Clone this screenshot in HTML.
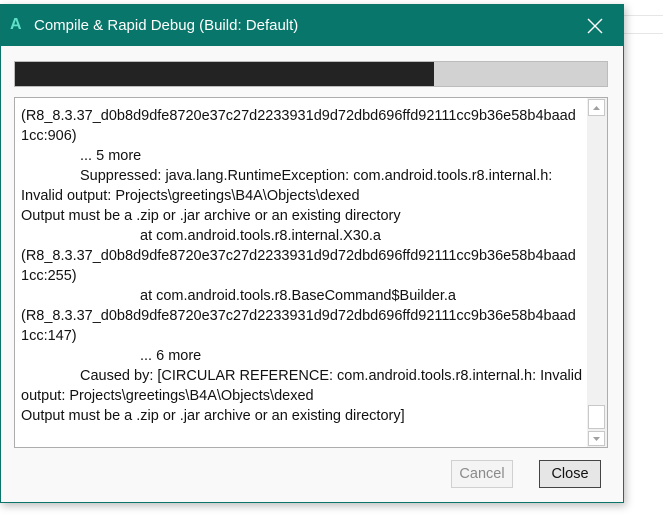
<!DOCTYPE html>
<html><head><meta charset="utf-8"><style>
*{margin:0;padding:0;box-sizing:border-box}
body{width:663px;height:518px;background:#fff;position:relative;overflow:hidden;font-family:"Liberation Sans",sans-serif}
.bgl{position:absolute;left:623px;width:40px;height:1px;background:#e6e6e6}
.win{position:absolute;left:0;top:4px;width:624px;height:499px;background:#f9f9f9;border:1px solid #0a7568;box-shadow:2px 3px 8px rgba(0,0,0,.25)}
.title{position:absolute;left:0;top:0;width:622px;height:41px;background:#08766a;color:#fff;font-size:15px}
.title .a{position:absolute;left:9px;top:11px;color:#5fe0c8;font-weight:bold;font-size:16px}
.title .t{position:absolute;left:33px;top:12px}
.title .x{position:absolute;left:586px;top:13px}
.prog{position:absolute;left:13px;top:56px;width:594px;height:26px;background:#d2d2d2;border:1px solid #bcbcbc}
.prog div{position:absolute;left:0;top:0;width:419px;height:24px;background:#232323}
.ta{position:absolute;left:13px;top:92px;width:594px;height:351px;background:#fff;border:1px solid #adadad}
.sb{position:absolute;right:0;top:0;width:20px;height:349px;background:#f1f1f1}
.sb .b{position:absolute;left:1px;width:17px;background:#fff;border:1px solid #c8c8c8}
.ln{position:absolute;white-space:pre;font-size:14.5px;color:#111;left:6px}
.btn{position:absolute;top:455px;width:62px;height:28px;font-size:14.5px;text-align:center;line-height:26px}
</style></head><body>
<div class="bgl" style="top:15px"></div><div class="bgl" style="top:33px"></div>
<div class="win">
<div class="title"><span class="a">A</span><span class="t">Compile &amp; Rapid Debug (Build: Default)</span>
<svg class="x" width="16" height="16" viewBox="0 0 16 16"><path d="M1 1L15 15M15 1L1 15" stroke="#fff" stroke-width="1.4"/></svg></div>
<div class="prog"><div></div></div>
<div class="ta">
<div class="ln" style="top:10px">(R8_8.3.37_d0b8d9dfe8720e37c27d2233931d9d72dbd696ffd92111cc9b36e58b4baad</div>
<div class="ln" style="top:30px">1cc:906)</div>
<div class="ln" style="top:50px;left:65px">... 5 more</div>
<div class="ln" style="top:70px;left:65px">Suppressed: java.lang.RuntimeException: com.android.tools.r8.internal.h:</div>
<div class="ln" style="top:90px">Invalid output: Projects\greetings\B4A\Objects\dexed</div>
<div class="ln" style="top:110px">Output must be a .zip or .jar archive or an existing directory</div>
<div class="ln" style="top:130px;left:125px">at com.android.tools.r8.internal.X30.a</div>
<div class="ln" style="top:150px">(R8_8.3.37_d0b8d9dfe8720e37c27d2233931d9d72dbd696ffd92111cc9b36e58b4baad</div>
<div class="ln" style="top:170px">1cc:255)</div>
<div class="ln" style="top:190px;left:125px">at com.android.tools.r8.BaseCommand$Builder.a</div>
<div class="ln" style="top:210px">(R8_8.3.37_d0b8d9dfe8720e37c27d2233931d9d72dbd696ffd92111cc9b36e58b4baad</div>
<div class="ln" style="top:230px">1cc:147)</div>
<div class="ln" style="top:250px;left:125px">... 6 more</div>
<div class="ln" style="top:270px;left:65px">Caused by: [CIRCULAR REFERENCE: com.android.tools.r8.internal.h: Invalid</div>
<div class="ln" style="top:290px">output: Projects\greetings\B4A\Objects\dexed</div>
<div class="ln" style="top:310px">Output must be a .zip or .jar archive or an existing directory]</div>
<div class="sb">
<div class="b" style="top:1px;height:17px"><svg width="15" height="15"><path d="M4 10L7.5 6L11 10Z" fill="#a0a0a0"/></svg></div>
<div class="b" style="top:307px;height:24px"></div>
<div class="b" style="top:333px;height:15px"><svg width="15" height="13"><path d="M4 5L7.5 9L11 5Z" fill="#a0a0a0"/></svg></div>
</div>
</div>
<div class="btn" style="left:450px;border:1px solid #d0d0d0;background:#f4f4f4;color:#8a8a8a">Cancel</div>
<div class="btn" style="left:538px;border:1px solid #444;background:#e6e6e6;color:#111">Close</div>
</div>
</body></html>
